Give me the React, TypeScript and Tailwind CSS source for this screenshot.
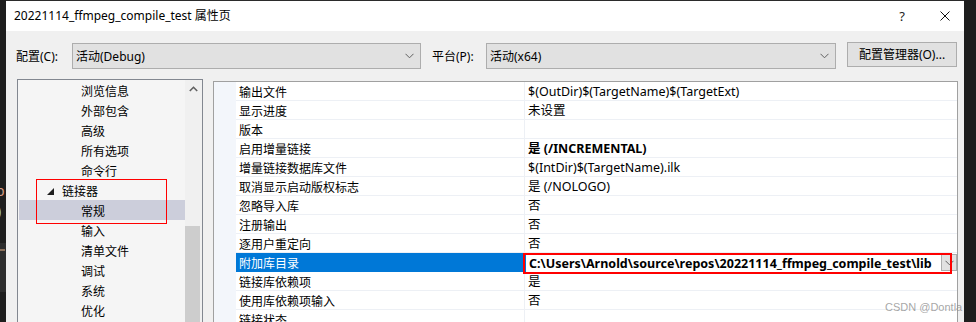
import React from "react";

const treeItems: { t: string; kind: "child" | "parent" | "sel" }[] = [
  { t: "浏览信息", kind: "child" },
  { t: "外部包含", kind: "child" },
  { t: "高级", kind: "child" },
  { t: "所有选项", kind: "child" },
  { t: "命令行", kind: "child" },
  { t: "链接器", kind: "parent" },
  { t: "常规", kind: "sel" },
  { t: "输入", kind: "child" },
  { t: "清单文件", kind: "child" },
  { t: "调试", kind: "child" },
  { t: "系统", kind: "child" },
  { t: "优化", kind: "child" },
];

const props: { n: string; v: string; bold?: boolean; sel?: boolean }[] = [
  { n: "输出文件", v: "$(OutDir)$(TargetName)$(TargetExt)" },
  { n: "显示进度", v: "未设置" },
  { n: "版本", v: "" },
  { n: "启用增量链接", v: "是 (/INCREMENTAL)", bold: true },
  { n: "增量链接数据库文件", v: "$(IntDir)$(TargetName).ilk" },
  { n: "取消显示启动版权标志", v: "是 (/NOLOGO)" },
  { n: "忽略导入库", v: "否" },
  { n: "注册输出", v: "否" },
  { n: "逐用户重定向", v: "否" },
  {
    n: "附加库目录",
    v: "C:\\Users\\Arnold\\source\\repos\\20221114_ffmpeg_compile_test\\lib",
    bold: true,
    sel: true,
  },
  { n: "链接库依赖项", v: "是" },
  { n: "使用库依赖项输入", v: "否" },
  { n: "链接状态", v: "" },
];

function Chevron({ className = "" }: { className?: string }) {
  return (
    <svg width="9" height="6" viewBox="0 0 9 6" className={className}>
      <path d="M0.5 0.8 L4.5 4.8 L8.5 0.8" fill="none" stroke="#606060" strokeWidth="1" />
    </svg>
  );
}

function Combo({ text, w }: { text: string; w: string }) {
  return (
    <div
      className={`${w} flex h-[26px] items-center justify-between border border-[#adadad] bg-[#e1e1e1] pl-[3px] pr-[6px]`}
    >
      <span className="pt-[1px]">{text}</span>
      <Chevron />
    </div>
  );
}

function LeftStrip() {
  return (
    <div className="flex w-[6px] shrink-0 flex-col overflow-hidden bg-[#1e1e1e]">
      <div className="h-[181px] shrink-0" />
      <div className="ml-[-4px] h-[20px] shrink-0 text-[14px] leading-[20px] text-[#d69d85]">b</div>
      <div className="ml-[-3px] h-[20px] shrink-0 text-[14px] leading-[20px] text-[#9cdcfe]">)</div>
      <div className="h-[22px] shrink-0" />
      <div className="flex h-[49px] shrink-0 flex-col bg-[#2d2d2d] pt-[6px]">
        <div className="h-[2px] w-[5px] bg-[#8a6f5a]" />
      </div>
    </div>
  );
}

function TitleBar() {
  return (
    <div className="flex h-[30px] shrink-0 items-center justify-between bg-white pl-[8px] pr-[14px]">
      <span className="text-[12px]">20221114_ffmpeg_compile_test 属性页</span>
      <div className="flex items-center">
        <span className="text-[13px] text-[#222]">?</span>
        <svg width="10" height="10" viewBox="0 0 10 10" className="ml-[35px]">
          <path d="M0.5 0.5 L9.5 9.5 M9.5 0.5 L0.5 9.5" stroke="#111" strokeWidth="1" />
        </svg>
      </div>
    </div>
  );
}

function ConfigRow() {
  return (
    <div className="mt-[12px] flex h-[26px] items-start pl-[10px]">
      <span className="flex h-[26px] w-[56px] items-center pt-[1px]">配置(C):</span>
      <Combo text="活动(Debug)" w="w-[349px]" />
      <span className="ml-[11px] flex h-[26px] w-[54px] items-center pt-[1px]">平台(P):</span>
      <Combo text="活动(x64)" w="w-[350px]" />
      <div className="ml-[11px] mt-[-1px] flex h-[25px] w-[110px] items-center justify-center border border-[#adadad] bg-[#e1e1e1] pt-[1px]">
        配置管理器(O)...
      </div>
    </div>
  );
}

function TreePanel() {
  return (
    <div className="relative flex h-[260px] w-[186px] shrink-0 border border-[#828790] bg-[#f5f5f5]">
      <div className="flex w-[167px] flex-col">
        {treeItems.map((it) => (
          <div key={it.t} className="flex h-[20px] shrink-0 items-center pt-[3px]">
            {it.kind === "parent" ? (
              <div className="flex items-center pl-[29px]">
                <svg width="7" height="7" viewBox="0 0 7 7">
                  <path d="M7 0 L7 7 L0 7 Z" fill="#1e1e1e" />
                </svg>
                <span className="ml-[8px]">{it.t}</span>
              </div>
            ) : it.kind === "sel" ? (
              <div className="ml-[1px] mt-[-3px] flex h-[20px] flex-1 items-center bg-[#cccedb] pl-[62px] pt-[3px]">
                {it.t}
              </div>
            ) : (
              <span className="pl-[63px]">{it.t}</span>
            )}
          </div>
        ))}
      </div>
      <div className="flex w-[17px] flex-col bg-[#f0f0f0]">
        <div className="flex h-[20px] items-center justify-center">
          <svg width="9" height="6" viewBox="0 0 9 6">
            <path d="M0.8 5 L4.5 1.3 L8.2 5" fill="none" stroke="#606060" strokeWidth="1.6" />
          </svg>
        </div>
        <div className="h-[136px]" />
        <div className="h-[120px] w-[15px] bg-[#cdcdcd]" />
      </div>
      <div className="pointer-events-none absolute left-[18px] top-[99px] h-[45px] w-[131px] border border-[#ff0000]" />
    </div>
  );
}

function PropertyGrid() {
  return (
    <div className="mt-[2px] flex h-[260px] w-[745px] shrink-0 flex-col border border-[#a0a0a0] bg-white">
      {props.map((p) => (
        <div key={p.n} className="flex h-[19px] shrink-0">
          <div className="w-[22px] shrink-0 bg-[#f3f6fb]" />
          <div
            className={`flex w-[288px] shrink-0 items-center pl-[3px] pt-[3px] ${
              p.sel ? "bg-[#0078d7] text-white" : "border-b border-[#edf0f5]"
            }`}
          >
            {p.n}
          </div>
          {p.sel ? (
            <div className="relative flex flex-1 items-center border-l-2 border-[#0078d7] bg-white pl-[3px] pt-[3px] text-[12.5px] font-bold">
              <span>{p.v}</span>
              <div className="absolute right-0 top-[1px] flex h-[17px] w-[16px] items-center justify-center border border-[#adadad] bg-[#e1e1e1]">
                <Chevron />
              </div>
              <div className="pointer-events-none absolute left-[-3px] right-[5px] top-[0px] bottom-[-2px] border-2 border-[#ff0000]" />
            </div>
          ) : (
            <div
              className={`flex flex-1 items-center border-b border-l border-[#edf0f5] pl-[3px] pt-[3px] text-[12.5px] ${
                p.bold ? "font-bold" : ""
              }`}
            >
              {p.v}
            </div>
          )}
        </div>
      ))}
    </div>
  );
}

function Dialog() {
  return (
    <div className="flex w-[958px] shrink-0 flex-col border-t border-[#2b2b2b] bg-[#f0f0f0]">
      <TitleBar />
      <ConfigRow />
      <div className="mt-[10px] flex items-start gap-[10px] pl-[11px]">
        <TreePanel />
        <PropertyGrid />
      </div>
    </div>
  );
}

export default function App() {
  return (
    <div className="relative flex h-[322px] w-[976px] overflow-hidden bg-[#1e1e1e] text-[12px] leading-none text-black font-[family-name:'Noto_Sans','Noto_Sans_CJK_SC',sans-serif]">
      <LeftStrip />
      <Dialog />
      <div className="pointer-events-none absolute left-[885px] top-[302px] text-[11px] leading-none text-[#8f8f8f]/80 font-[family-name:'Liberation_Sans',sans-serif]">
        CSDN @Dontla
      </div>
    </div>
  );
}
